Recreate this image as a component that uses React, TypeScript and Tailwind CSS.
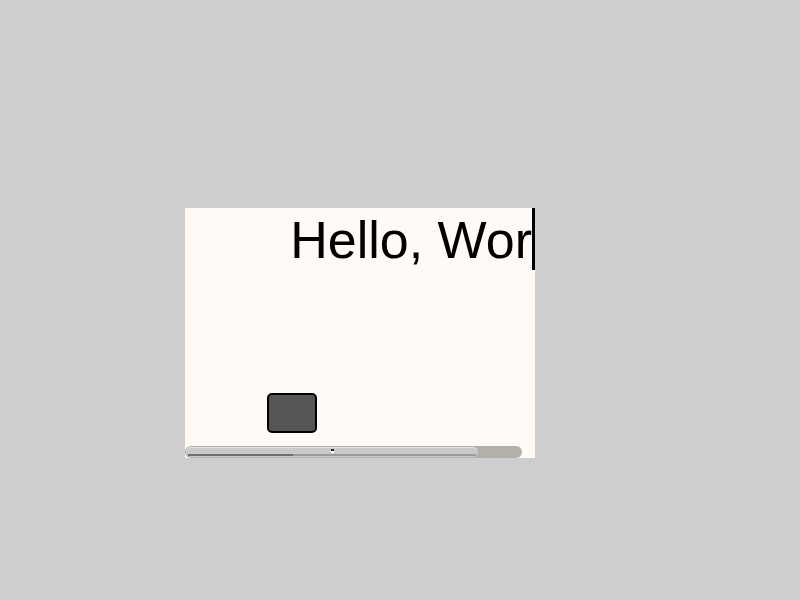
export default function App() {
  return (
    <div className="min-h-[600px] w-[800px] bg-[#cecece] pl-[185px] pt-[208px]">
      <div className="flex h-[250px] w-[350px] flex-col overflow-hidden bg-[#fffaf6]">
        {/* typed text with caret */}
        <div className="flex h-[62px] items-start justify-end">
          <span className="whitespace-nowrap pt-[6px] font-['Liberation_Sans',Arial,sans-serif] text-[52px] leading-none text-black">
            Hello, Wor
          </span>
          <span className="h-[62px] w-[3px] shrink-0 bg-black" />
        </div>

        <button className="ml-[82px] mt-[123px] h-[40px] w-[50px] rounded-[5px] border-2 border-black bg-[#555555]" />

        {/* scrollbar */}
        <div className="mt-[13px] flex h-[12px] w-[337px] rounded-full bg-[#b3b0aa] p-[1px]">
          <div className="flex h-[10px] w-[292px] flex-col overflow-hidden rounded-full border-t border-[#e2e2e2] bg-[#cacaca] px-[2px] pb-[1px]">
            <div className="flex flex-1 flex-col items-center pt-[1px]">
              <span className="h-[2px] w-[3px] bg-[#222222]" />
              <span className="h-[2px] w-[3px] bg-white" />
            </div>
            <div className="flex h-[2px]">
              <span className="w-[105px] bg-[#6e6e6e]" />
              <span className="flex-1 bg-[#9a9a9a]" />
            </div>
          </div>
        </div>
      </div>
    </div>
  )
}
